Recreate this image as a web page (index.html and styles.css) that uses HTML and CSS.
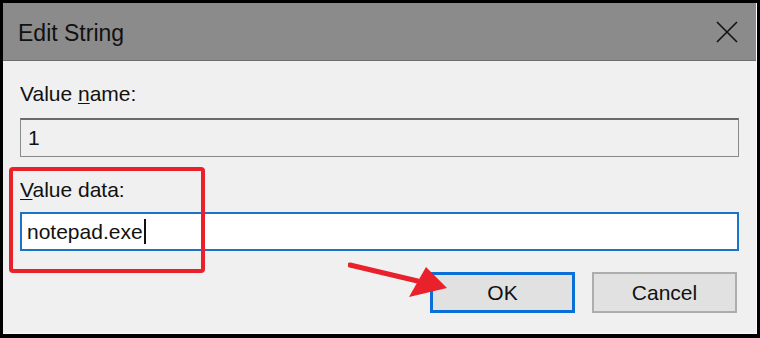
FILE: index.html
```html
<!DOCTYPE html>
<html>
<head>
<meta charset="utf-8">
<link rel="stylesheet" href="styles.css">
</head>
<body>
<div class="screen">
  <div class="dialog">
    <div class="titlebar">
      <span class="title">Edit String</span>
      <svg class="close" width="22" height="22" viewBox="0 0 22 22"><path d="M1 1 L21 21 M21 1 L1 21" stroke="#111" stroke-width="1.6" fill="none"/></svg>
    </div>
    <div class="content">
      <div class="label label-name">Value <u>n</u>ame:</div>
      <div class="field field-ro">1</div>
      <div class="label label-data"><u>V</u>alue data:</div>
      <div class="field field-edit">notepad.exe<span class="caret"></span></div>
      <div class="buttons">
        <div class="btn btn-default">OK</div>
        <div class="btn">Cancel</div>
      </div>
    </div>
  </div>
  <div class="highlight"></div>
  <svg class="arrow" width="120" height="50" viewBox="0 0 120 50">
    <path d="M2 6 L78 24" stroke="#e8212b" stroke-width="5" stroke-linecap="round" fill="none"/>
    <polygon points="99,29 78,8 61,38" fill="#e8212b"/>
  </svg>
</div>
</body>
</html>
```
FILE: styles.css
```css
html, body {
  margin: 0;
  padding: 0;
  background: #000;
}
.screen {
  position: relative;
  width: 760px;
  height: 338px;
  box-sizing: border-box;
  padding: 3px 3px 4px 3px;
  background: #000;
  font-family: "Liberation Sans", Arial, sans-serif;
  color: #111;
}
.dialog {
  height: 100%;
  background: #f0f0f0;
  display: flex;
  flex-direction: column;
  border-right: 1px solid #fafafa;
  border-bottom: 1px solid #fafafa;
  box-sizing: border-box;
}
.titlebar {
  height: 58px;
  box-sizing: border-box;
  background: #8b8b8b;
  border-bottom: 1px solid #6d6d6d;
  display: flex;
  align-items: center;
  justify-content: space-between;
  padding: 0 18px 0 15px;
}
.title {
  font-size: 23px;
  line-height: 26px;
  margin-top: 2px;
  color: #111;
}
.close {
  display: block;
  margin-top: 0;
}
.content {
  display: flex;
  flex-direction: column;
  padding: 0 17px 0 17px;
}
.label {
  font-size: 21px;
  line-height: 24px;
  color: #111;
}
.label u {
  text-underline-offset: 2px;
  text-decoration-thickness: 1px;
}
.label-name {
  margin-top: 21px;
}
.label-data {
  margin-top: 21px;
}
.field {
  margin-top: 12px;
  height: 39px;
  box-sizing: border-box;
  font-size: 21px;
  display: flex;
  align-items: center;
  padding-left: 7px;
}
.field-ro {
  background: #f0f0f0;
  border: 1px solid #8a8a8a;
  border-top: 2px solid #6a6a6a;
}
.field-edit {
  margin-top: 10px;
  background: #fff;
  border: 2px solid #1a73c9;
  padding-left: 5px;
}
.caret {
  display: inline-block;
  width: 2px;
  height: 25px;
  background: #111;
  margin-left: 1px;
}
.buttons {
  display: flex;
  justify-content: flex-end;
  gap: 17px;
  margin-top: 21px;
  padding-right: 2px;
}
.btn {
  width: 145px;
  height: 41px;
  box-sizing: border-box;
  background: #e1e1e1;
  border: 2px solid #adadad;
  display: flex;
  align-items: center;
  justify-content: center;
  font-size: 21px;
  color: #111;
}
.btn-default {
  border: 3px solid #0a6fd6;
}
.highlight {
  position: absolute;
  left: 9px;
  top: 167px;
  width: 196px;
  height: 106px;
  box-sizing: border-box;
  border: 4px solid #e8212b;
  border-radius: 4px;
}
.arrow {
  position: absolute;
  left: 348px;
  top: 259px;
}
```
